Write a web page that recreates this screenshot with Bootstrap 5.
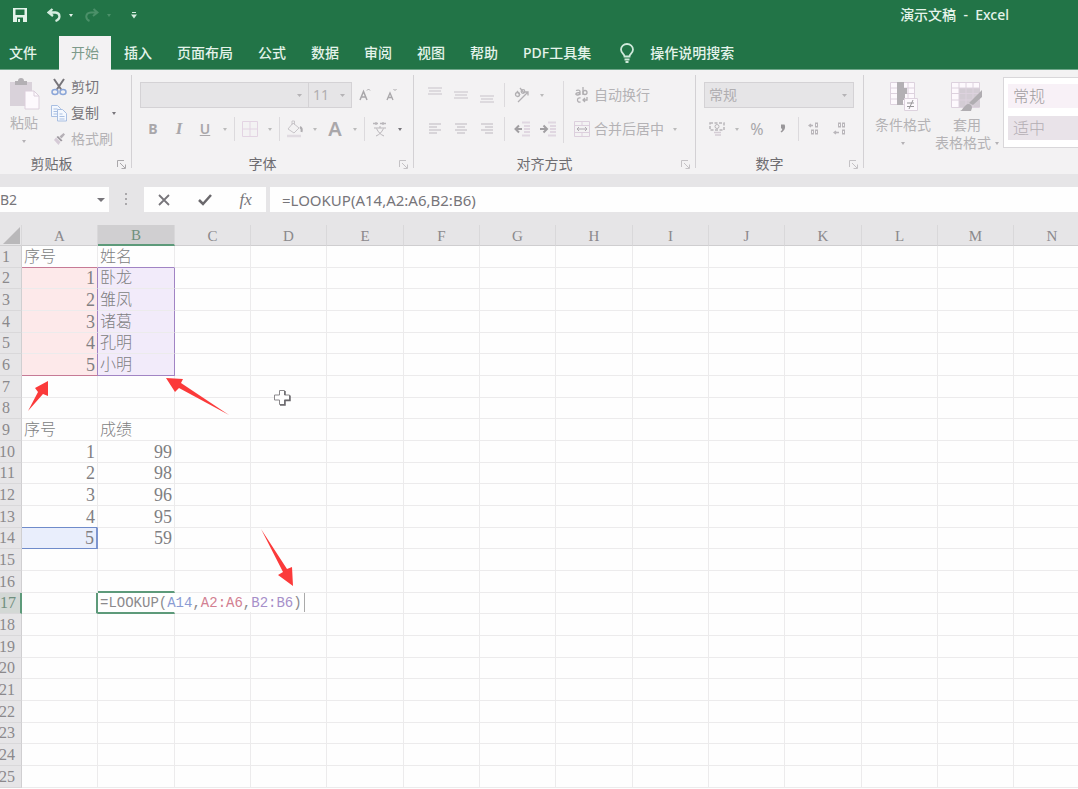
<!DOCTYPE html>
<html lang="zh-CN">
<head>
<meta charset="utf-8">
<meta name="viewport" content="width=device-width, initial-scale=1">
<title>演示文稿 - Excel</title>
<link href="https://cdn.jsdelivr.net/npm/bootstrap@5.3.0/dist/css/bootstrap.min.css" rel="stylesheet">
<style>
:root{--green:#227447;--ribbon:#f3f2f3;--chrome:#e6e5e7;--muted:#b4b2b5;--ink:#77757a}
body{font-family:"Noto Sans","Noto Sans CJK SC",sans-serif;font-size:14px;line-height:18px;color:var(--ink);background:#fefefe}
button{color:inherit;font:inherit;background:none;border:0;padding:0}
svg{display:block;flex:none}
.topbar{background:var(--green);color:#e4f3ea}
.titlebar{height:36px;padding:0 69px 6px 13px}
.doc-title{font-weight:500}
.qat{gap:8px}
.tabs{gap:1px;height:34px;border-bottom:1px solid #6fa78a}
.tab-link{height:34px;padding:0 12px;display:flex;align-items:center;color:#e4f3ea;text-decoration:none;font-weight:500;white-space:nowrap}
.tab-link.file{padding:0 21px 0 9px}
.tab-link.current{background:var(--ribbon);color:#7d9a8a;font-weight:400}
.ribbon{background:var(--ribbon);height:104px;overflow:hidden}
.group{padding-top:8px;flex:none;display:flex;flex-direction:column}
.g-clip{width:131px;padding-top:4px}.g-font,.g-align{width:281px}.g-num{width:167px}
.clip-list{padding-left:11px}
.divide{width:1px;background:#d3d1d4;margin:5px 0 6px;flex:none}
.line{height:34px;display:flex;align-items:center}
.caption-row{height:20px;margin-top:auto;display:flex;align-items:center;color:#6e6c70}
.caption-row span{flex:1;text-align:center}
.caption-row .near{padding-right:8px}
.launch{width:20px;height:20px;display:flex;align-items:center;justify-content:center;color:#aaa8ab}
.tool{width:26px;height:26px;display:inline-flex;align-items:center;justify-content:center;color:#a9a7aa;flex:none}
.drop{width:14px;height:26px;display:inline-flex;align-items:center;justify-content:center;flex:none;color:#bbb}
.drop::before,.tri{content:"";border:2px solid transparent;border-top:3px solid currentColor;border-bottom:0}
.drop.dark{color:#77757a}
.namebox .drop::before{border-width:4px 4px 0}
.bar{width:1px;height:24px;margin:0 2px;background:#dcdadd;flex:none}
.bar.wide{margin:0 4px}
.bar.tall{height:62px;align-self:center}
.pick{border-radius:0;height:26px;padding:0 18px 0 4px;border:1px solid #d4d2d5;background-color:#e6e5e7;color:#b0aeb1;font-size:14px;line-height:18px;background-position:right 6px center;background-size:5px 3px;
--bs-form-select-bg-img:url("data:image/svg+xml,%3csvg xmlns='http://www.w3.org/2000/svg' viewBox='0 0 5 3'%3e%3cpath d='M0 0h5L2.5 3z' fill='%23b5b3b6'/%3e%3c/svg%3e")}
.pick:disabled{background-color:#e6e5e7;color:#b0aeb1;opacity:1}
.p-font{width:169px}.p-size{width:44px;margin-left:-1px}.p-num{width:150px}
.label-btn{display:flex;align-items:center;gap:4px;color:var(--muted);height:26px;white-space:nowrap}
.label-btn.on{color:#77757a}
.big{display:flex;flex-direction:column;align-items:center;color:var(--muted);white-space:nowrap}
.styles{padding-left:3px}
.gallery{background:#fff;border:1px solid #d9d7da;border-right:0;height:71px;margin-top:7px;padding:6px 0 0 4px;flex:1 0 70px;overflow:hidden}
.style-chip{display:block;width:100%;height:24px;padding-left:5px;text-align:left;font-size:16px;line-height:22px;font-weight:300;background:#f8f1f7;color:#a09ca0;margin-bottom:8px}
.style-chip.mid{background:#e9e3e9;color:#b3adb3}
.fbar{background:var(--chrome);padding:13px 0}
.namebox{width:109px;height:25px;background:#fefefe}
.field{border:0;border-radius:0;background:#fefefe;height:25px;padding:0;color:#77757a;font-size:14px;line-height:18px;outline:0}
.namebox .field{width:90px}
.dots{width:35px;color:#aaa8ab}
.fx-tools{width:122px;background:#fefefe;margin-right:4px}
.fx-tools button{width:41px;display:flex;justify-content:center;align-items:center}
.fx-name{font-family:"Liberation Serif",serif;font-size:17px;font-style:italic}
.fx-input{padding-left:12px;flex:1;min-width:0;font-size:15px}
.italic-i{font-family:"Liberation Serif",serif;font-size:17px;font-weight:bold;font-style:italic}
.sheet{flex:1;overflow:hidden;position:relative;min-height:0}
.gridtable{table-layout:fixed;border-collapse:separate;border-spacing:0;width:0;font-size:16px;line-height:20px;font-weight:300;font-family:"Liberation Serif","Noto Sans CJK SC",serif}
.gridtable col{width:76px}
.gridtable col:nth-child(3n){width:77px}
.gridtable col.index{width:22px}
.gridtable th,.gridtable td{padding:0;border:0 solid #ecebec;border-width:0 1px 1px 0;white-space:nowrap;height:22px}
.gridtable tbody tr:nth-child(3n+2)>*{height:21px}
.gridtable th{background:var(--chrome);font-weight:400;color:#8b898c}
.gridtable thead th{height:21px;text-align:center;border-right-color:#d9d8da;border-bottom-color:#cfced0;font-size:15px;line-height:18px;padding-top:2px}
.gridtable thead th:first-child{padding-top:0}
.gridtable tbody th{border-right-color:#d0cfd1;border-bottom-color:#d9d8da;text-align:right;padding-right:7px;direction:rtl}
.gridtable tbody th.short{padding-right:12px}
.gridtable thead th.sel{background:#d0cfd1;border-bottom:2px solid #5d9a7a;color:#6f8f7e;padding-top:1px}
.gridtable tbody th.sel{background:#d3d8d5;border-right:2px solid #5d9a7a;color:#6f8f7e;padding-right:6px}
.gridtable td{padding-left:2px;color:#807e82}
.gridtable td.n{text-align:right;padding-right:2px;font-size:18px}
.gridtable .red{background:#fde9ea}
.gridtable .violet{background:#f2ebfa}
.gridtable .blue{background:#e9eefc;border-right:2px solid #7d95cf}
.gridtable .b-red{border-bottom-color:#c67a96}
.gridtable .b-violet{border-bottom-color:#a184c4}
.gridtable .b-blue{border-bottom-color:#6f8bca}
.gridtable .r-violet{border-right-color:#a184c4}
.gridtable .b-green{border-bottom:2px solid #5d9a7a}
.gridtable .r-green{border-right:2px solid #5d9a7a}
.gridtable .edit{position:relative;border-bottom:2px solid #5d9a7a}
.editor{position:absolute;left:0;top:0;height:19px;padding:0 2px;background:#fefefe;border-right:1px solid #aaa;font:14px/20px "Liberation Mono","Noto Sans CJK SC",monospace;color:#8b898c;z-index:1}
.editor .c1{color:#8a9bd3}.editor .c2{color:#d28091}.editor .c3{color:#a68fc9}
.corner{width:0;height:0;margin-left:3px;border-left:17px solid transparent;border-bottom:17px solid #b9b8ba}
.marks{position:absolute;left:0;top:0;z-index:2;pointer-events:none}
</style>
</head>
<body class="vh-100 overflow-hidden d-flex flex-column">
<header class="topbar flex-shrink-0">
  <div class="titlebar d-flex align-items-center justify-content-between">
    <div class="qat d-flex align-items-center">
      <button aria-label="保存"><svg width="14" height="14" viewBox="0 0 14 14"><path d="M0 0h14v14H0z" fill="#e4f3ea"/><path d="M2.500 1.500h9v5.500h-9zM4 9.500h6V14H4z" fill="#227447"/><path d="M5 11h2v3H5z" fill="#e4f3ea"/></svg></button>
      <button aria-label="撤消" class="ms-2 ps-1"><svg width="14" height="14" viewBox="0 0 14 14" fill="none" stroke="#d5ecdf" stroke-width="2.300"><path d="M5.500 1 1.500 4.500 6 8M2 4.500h6.500c5 .5 5.500 6.500 0 8.500"/></svg></button>
      <span class="tri"></span>
      <button aria-label="恢复" class="ms-1"><svg width="14" height="14" viewBox="0 0 14 14" fill="none" stroke="#4b9069" stroke-width="2"><path d="M8.500 1l4 3.500L8 8M12 4.500H6C0 5 0 11 4.500 13"/></svg></button>
      <span class="tri" style="color:#4b9069"></span>
      <button aria-label="自定义快速访问工具栏" class="ms-2 ps-1"><svg width="6" height="7" viewBox="0 0 6 7" fill="#d5ecdf"><path d="M1 0h4v1H1zM0 2.500h6L3 6.500z"/></svg></button>
    </div>
    <div class="doc-title">演示文稿 &nbsp;-&nbsp; Excel</div>
  </div>
  <nav class="tabs d-flex">
    <a class="tab-link file" href="#">文件</a>
    <a class="tab-link current" href="#" aria-current="page">开始</a>
    <a class="tab-link" href="#">插入</a>
    <a class="tab-link" href="#">页面布局</a>
    <a class="tab-link" href="#">公式</a>
    <a class="tab-link" href="#">数据</a>
    <a class="tab-link" href="#">审阅</a>
    <a class="tab-link" href="#">视图</a>
    <a class="tab-link" href="#">帮助</a>
    <a class="tab-link" href="#">PDF工具集</a>
    <a class="tab-link ps-3" href="#"><svg class="me-3" width="14" height="20" viewBox="0 0 14 20" fill="none" stroke="#cfe9da" stroke-width="1.800"><path d="M4.500 13.500C4.500 11 1 10 1 6.500a6 5.500 0 0 1 12 0c0 3.500-3.500 4.500-3.500 7z"/><path d="M4.500 16.500h5M5.500 19h3"/></svg>操作说明搜索</a>
  </nav>
</header>

<section class="ribbon d-flex flex-shrink-0">
  <div class="group g-clip">
    <div class="d-flex">
      <button class="big ms-2 pt-1 justify-content-start"><svg width="32" height="32" viewBox="0 0 32 32"><path d="M2 4h22v24H2z" fill="#d9d2da"/><path d="M7 3h3a3 3 0 0 1 6 0h3v4H7z" fill="#b3b0b4"/><path d="M17 13h9l5 5v13H17z" fill="#fdf9fd" stroke="#dccfdc"/><path d="M26 13v5h5" fill="none" stroke="#dccfdc"/></svg><span class="mt-1">粘贴</span><span class="tri mt-2"></span></button>
      <div class="clip-list">
        <button class="label-btn on"><svg width="16" height="18" viewBox="0 0 16 18" fill="none"><path d="M3 1l7.500 11M13 1 5.500 12" stroke="#77757a" stroke-width="2"/><ellipse cx="4" cy="14" rx="3" ry="2.500" stroke="#8ba6d8" stroke-width="1.500"/><ellipse cx="12" cy="14" rx="3" ry="2.500" stroke="#8ba6d8" stroke-width="1.500"/></svg>剪切</button>
        <div class="d-flex"><button class="label-btn on"><svg width="16" height="18" viewBox="0 0 16 18" fill="#f4f8fe" stroke="#a9bfe2"><path d="M.5 1.500h6l3 3v8h-9zM2.500 5h4M2.500 7.500h4M2.500 10h4"/><path d="M6.500 5.500h5l4 4v7.500h-9zM8.500 10h3M8.500 12.500h5M8.500 15h5"/></svg>复制</button><button class="drop dark ms-2" aria-label="复制选项"></button></div>
        <button class="label-btn"><svg width="16" height="16" viewBox="0 0 16 16"><path d="M12.500 2l1.500 1.500-3.500 4-2-2z" fill="#b5b0b6"/><path d="M7 5l4.500 4.500-1.500 1-4.500-4.500z" fill="#9d989f"/><path d="M5 6.500l4.500 4.500-2 3L3 9z" fill="#d6cbd7"/></svg>格式刷</button>
      </div>
    </div>
    <div class="caption-row"><span class="near">剪贴板</span><button class="launch" aria-label="剪贴板设置"><svg width="9" height="9" viewBox="0 0 9 9" fill="none" stroke="currentColor"><path d="M.5 7V.5H7M3 3l5 5M8.500 4.500v4h-4"/></svg></button></div>
  </div>
  <div class="divide"></div>

  <div class="group g-font">
    <div class="line ps-2">
      <select class="form-select pick p-font" aria-label="字体" disabled><option></option></select>
      <select class="form-select pick p-size" aria-label="字号" disabled><option>11</option></select>
      <button class="tool" aria-label="增大字号"><svg width="16" height="16" viewBox="0 0 16 16" fill="none" stroke="currentColor"><path d="M3 13 6.500 4.500 10 13M4.500 10h4" stroke-width="1.500"/><path d="M10 3.500 11.500 2 13 3.500"/></svg></button>
      <button class="tool" aria-label="减小字号"><svg width="16" height="16" viewBox="0 0 16 16" fill="none" stroke="currentColor"><path d="M4 13 7 6l3 7M5 10.500h4" stroke-width="1.300"/><path d="M10.500 2 12 3.500 13.500 2"/></svg></button>
    </div>
    <div class="line ps-2">
      <button class="tool fw-bold">B</button>
      <button class="tool italic-i">I</button>
      <button class="tool text-decoration-underline fw-semibold">U</button>
      <button class="drop" aria-label="下划线选项"></button>
      <span class="bar"></span>
      <button class="tool" aria-label="边框"><svg width="16" height="16" viewBox="0 0 16 16" fill="none" stroke="#e3d4e3"><path d="M.5.5h15v15H.5zM8 .5v15M.5 8h15"/></svg></button>
      <button class="drop" aria-label="边框选项"></button>
      <span class="bar"></span>
      <button class="tool" aria-label="填充颜色"><svg width="18" height="18" viewBox="0 0 18 18" fill="none" stroke="#c8c5c9"><path d="M7 3l6 5-5 5-6-4zM6 5V1h2.500v4"/><path d="M14 7c2 1 2 3 1.500 5" stroke-width="2" stroke="#b0aeb1"/><path d="M1 16h14" stroke-width="2.500" stroke="#e0dbe1"/></svg></button>
      <button class="drop" aria-label="填充选项"></button>
      <button class="tool fw-semibold fs-5" aria-label="字体颜色">A</button>
      <button class="drop" aria-label="颜色选项"></button>
      <span class="bar"></span>
      <button class="tool" aria-label="拼音指南"><svg width="16" height="16" viewBox="0 0 16 16" fill="none" stroke="#b9b6ba"><path d="M1 2.500h5M8 2.500h6M4 1v3M11 1v3" stroke-width="1.300"/><path d="M2 7h12M8 5v2M4.500 7.500c2 4 4 6 7.500 7.500M11.500 7.500c-2 4-4 6-7.500 7.500"/></svg></button>
      <button class="drop dark" aria-label="拼音选项"></button>
    </div>
    <div class="caption-row"><span>字体</span><button class="launch" aria-label="字体设置"><svg width="9" height="9" viewBox="0 0 9 9" fill="none" stroke="#c4c2c5"><path d="M.5 7V.5H7M3 3l5 5M8.500 4.500v4h-4"/></svg></button></div>
  </div>
  <div class="divide"></div>

  <div class="group g-align">
    <div class="d-flex ps-2">
      <div>
        <div class="line">
          <button class="tool" aria-label="顶端对齐"><svg width="14" height="16" stroke="#dddade" stroke-width="2"><path d="M0 1h14M1 4h12M0 7h14"/></svg></button>
          <button class="tool" aria-label="垂直居中"><svg width="14" height="16" stroke="#dddade" stroke-width="2"><path d="M0 5h14M1 8h12M0 11h14"/></svg></button>
          <button class="tool" aria-label="底端对齐"><svg width="14" height="16" stroke="#dddade" stroke-width="2"><path d="M0 9h14M1 12h12M0 15h14"/></svg></button>
          <span class="bar wide"></span>
          <button class="tool" aria-label="方向"><svg width="16" height="16" viewBox="0 0 16 16" fill="none" stroke="#b2b0b3" stroke-width="1.300"><path d="M4 15 14 5M10.500 5H14v3.500"/><circle cx="3.500" cy="7.500" r="2"/><path d="M3 4l3 4M6 1l4 5"/><circle cx="9" cy="4.500" r="1.800"/></svg></button>
          <button class="drop" aria-label="方向选项"></button>
        </div>
        <div class="line">
          <button class="tool" aria-label="左对齐"><svg width="14" height="14" stroke="#d8d5d9" stroke-width="2"><path d="M1 2h12M1 5h8M1 8h12M1 11h8"/></svg></button>
          <button class="tool" aria-label="居中"><svg width="14" height="14" stroke="#d8d5d9" stroke-width="2"><path d="M1 2h12M3 5h8M1 8h12M3 11h8"/></svg></button>
          <button class="tool" aria-label="右对齐"><svg width="14" height="14" stroke="#d8d5d9" stroke-width="2"><path d="M1 2h12M5 5h8M1 8h12M5 11h8"/></svg></button>
          <span class="bar wide"></span>
          <button class="tool" aria-label="减少缩进量"><svg width="18" height="16" viewBox="0 0 18 16" fill="none"><path d="M9 1.500h8M11 5h6M11 8h6M11 11h6M9 14.500h8" stroke="#e0d7e1" stroke-width="2"/><path d="M9 8H3M6 4.500 2.500 8 6 11.500" stroke="#a19fa2" stroke-width="2"/></svg></button>
          <button class="tool" aria-label="增加缩进量"><svg width="18" height="16" viewBox="0 0 18 16" fill="none"><path d="M9 1.500h8M11 5h6M11 8h6M11 11h6M9 14.500h8" stroke="#e0d7e1" stroke-width="2"/><path d="M1 8h6M4.500 4.500 8 8l-3.500 3.500" stroke="#a19fa2" stroke-width="2"/></svg></button>
        </div>
      </div>
      <span class="bar tall"></span>
      <div class="ps-2">
        <div class="line"><button class="label-btn"><svg width="16" height="18" viewBox="0 0 16 18" fill="none" stroke="#b0aeb1" stroke-width="1.300"><path d="M2 4.500c3-1 4 0 4 1V9M6 6.500c-5 0-5 2.500-2.500 2.500C5 9 6 8 6 7M9 1v8"/><circle cx="11" cy="6.500" r="2"/><path d="M6.500 12c-4-1-4 5 0 4M13 11v3H9M11 12l-2 2 2 2"/></svg>自动换行</button></div>
        <div class="line"><button class="label-btn"><svg width="16" height="16" viewBox="0 0 16 16" fill="none"><path d="M.5.500h15v15H.5zM.5 4.500h15M.5 11.500h15M8 .5v4M8 11.500v4" stroke="#dccfdd"/><path d="M3 8h10M5 6 3 8l2 2M11 6l2 2-2 2" stroke="#b0aab2"/></svg>合并后居中</button><button class="drop ms-1" aria-label="合并选项"></button></div>
      </div>
    </div>
    <div class="caption-row"><span>对齐方式</span><button class="launch" aria-label="对齐设置"><svg width="9" height="9" viewBox="0 0 9 9" fill="none" stroke="#c4c2c5"><path d="M.5 7V.5H7M3 3l5 5M8.500 4.500v4h-4"/></svg></button></div>
  </div>
  <div class="divide"></div>

  <div class="group g-num">
    <div class="line ps-2"><select class="form-select pick p-num" aria-label="数字格式" disabled><option>常规</option></select></div>
    <div class="line ps-2">
      <button class="tool" aria-label="会计数字格式"><svg width="16" height="16" viewBox="0 0 16 16" fill="none" stroke="#b9b6ba"><path d="M1 2h14v7H1z" stroke-dasharray="3 1.500" stroke-width="1.500"/><circle cx="8" cy="5.500" r="2"/><path d="M5 11.500h7M6 14h6" stroke="#d5cdd5" stroke-width="1.500"/></svg></button>
      <button class="drop" aria-label="货币选项"></button>
      <button class="tool fs-6" aria-label="百分比">%</button>
      <button class="tool" aria-label="千位分隔"><svg width="8" height="12" viewBox="0 0 8 12"><path d="M2 1.500h3.500c1.500 3 0 6-3 8l-1-1c1.500-1 2-2 1.500-3H2z" fill="#99979a"/></svg></button>
      <span class="bar"></span>
      <button class="tool" aria-label="增加小数位数"><svg width="12" height="14" viewBox="0 0 12 14" fill="none" stroke="#b9b6ba"><path d="M1 3.500h4M3 2 1 3.500 3 5" stroke-width="1.300"/><rect x="7.500" y="1" width="2" height="4"/><rect x="3.500" y="8" width="2" height="4"/><rect x="7.500" y="8" width="2" height="4"/></svg></button>
      <button class="tool" aria-label="减少小数位数"><svg width="14" height="14" viewBox="0 0 14 14" fill="none" stroke="#b9b6ba"><path d="M1 10.500h5M3 9l-2 1.500L3 12" stroke-width="1.300"/><rect x="5.500" y="1" width="2" height="4"/><rect x="9.500" y="1" width="2" height="4"/><rect x="9.500" y="8" width="2" height="4"/></svg></button>
    </div>
    <div class="caption-row"><span>数字</span><button class="launch" aria-label="数字设置"><svg width="9" height="9" viewBox="0 0 9 9" fill="none" stroke="#c4c2c5"><path d="M.5 7V.5H7M3 3l5 5M8.500 4.500v4h-4"/></svg></button></div>
  </div>
  <div class="divide"></div>

  <div class="styles d-flex flex-fill overflow-hidden">
    <button class="big ps-2 pt-1 justify-content-start flex-shrink-0 mt-2"><svg width="30" height="30" viewBox="0 0 30 30"><path d="M2.500.5h24v22h-24z" fill="#fdf9fd" stroke="#ddd2de"/><path d="M2 6h25M2 11.500h25M2 17h25M20 0v23" stroke="#ddd2de" fill="none"/><path d="M9 0h7v6h3v6h-2v6h-2v5H9z" fill="#b3b0b4"/><path d="M16.500 16.500h13v12h-13z" fill="#fdf9fd" stroke="#ddd2de"/><path d="M19 21h7M19 24.500h7M25 18l-4 9" stroke="#99979a"/></svg><span class="mt-1">条件格式</span><span class="tri mt-2"></span></button>
    <button class="big ps-1 pe-1 pt-1 justify-content-start flex-shrink-0 mt-2"><svg width="32" height="30" viewBox="0 0 32 30"><path d="M.5.5h28v25H.5z" fill="#fdf9fd" stroke="#ddd2de"/><path d="M8 6h21v19H8z" fill="#d3ccd4"/><path d="M0 6h29M0 11.500h29M0 18h29M8 0v26M15 0v26M22 0v26" stroke="#ddd2de" fill="none"/><path d="M31 8v7l-9 8-4-2zM17 22c3 0 4 2 4 4l-1 3H9c3-1 4-6 8-7z" fill="#b0adb1"/></svg><span class="mt-1">套用</span><span class="d-flex align-items-center">表格格式<span class="tri ms-1"></span></span></button>
    <div class="gallery"><button class="style-chip">常规</button><button class="style-chip mid">适中</button></div>
  </div>
</section>

<section class="fbar d-flex flex-shrink-0">
  <div class="namebox d-flex align-items-center"><input class="field" aria-label="名称框" value="B2"><button class="drop dark ms-1" aria-label="名称列表"></button></div>
  <div class="dots d-flex align-items-center justify-content-center"><svg width="3" height="13" fill="currentColor"><path d="M0 0h2v2H0zM0 5h2v2H0zM0 10h2v2H0z"/></svg></div>
  <div class="fx-tools d-flex">
    <button aria-label="取消"><svg width="12" height="12" viewBox="0 0 12 12" fill="none" stroke="#77757a" stroke-width="1.800"><path d="M1 1l10 10M11 1 1 11"/></svg></button>
    <button aria-label="输入"><svg width="14" height="12" viewBox="0 0 14 12" fill="none" stroke="#6a686c" stroke-width="2.500"><path d="M1 6l4 4 8-9"/></svg></button>
    <button class="fx-name" aria-label="插入函数">fx</button>
  </div>
  <input class="field fx-input" aria-label="编辑栏" value="=LOOKUP(A14,A2:A6,B2:B6)">
</section>

<main class="sheet">
  <table class="gridtable" id="grid"></table>
  <svg class="marks" width="340" height="380" viewBox="0 225 340 380">
    <g fill="#fb3a3a">
      <path d="M28 411 38 392l-3-4 13-7v15l-5-2z"/>
      <path d="M166 378l17 1-2 4 48 32-50-27-4 4z"/>
      <path d="M261 529l26 40 5-2 1 19-15-11 5-3z"/>
    </g>
    <path d="M279.500 390.500h5v4.500h5v5h-5v4.500h-5V400h-5v-5h5z" fill="#fff" stroke="#8b898c"/>
    <path d="M285 391v4M290 395.500v5h-5v4.500h-5" fill="none" stroke="#6a686c" stroke-width="1.500"/>
  </svg>
</main>

<script>
const letters = 'ABCDEFGHIJKLMN'.split('');
const values = {
  A1:'序号', B1:'姓名', A2:1, B2:'卧龙', A3:2, B3:'雏凤', A4:3, B4:'诸葛', A5:4, B5:'孔明', A6:5, B6:'小明',
  A9:'序号', B9:'成绩', A10:1, B10:99, A11:2, B11:98, A12:3, B12:96, A13:4, B13:95, A14:5, B14:59
};
const marks = {
  A1:'b-red', B1:'b-violet', A2:'red r-violet', A3:'red r-violet', A4:'red r-violet', A5:'red r-violet', A6:'red r-violet b-red',
  B2:'violet r-violet', B3:'violet r-violet', B4:'violet r-violet', B5:'violet r-violet', B6:'violet r-violet b-violet',
  A13:'b-blue', A14:'blue b-blue', B16:'b-green', A17:'r-green', B17:'edit'
};
const formula = '<span class="editor">=LOOKUP(<span class="c1">A14</span>,<span class="c2">A2:A6</span>,<span class="c3">B2:B6</span>)</span>';
let html = '<colgroup><col class="index">' + letters.map(() => '<col>').join('') + '</colgroup><thead><tr><th><div class="corner"></div></th>';
html += letters.map(l => `<th scope="col"${l === 'B' ? ' class="sel"' : ''}>${l}</th>`).join('') + '</tr></thead><tbody>';
for (let r = 1; r <= 25; r++) {
  html += `<tr><th scope="row" class="${r < 10 ? 'short' : ''}${r === 17 ? ' sel' : ''}">${r}</th>`;
  for (const l of letters) {
    const v = values[l + r];
    html += `<td class="${marks[l + r] || ''}${typeof v === 'number' ? ' n' : ''}">${l + r === 'B17' ? formula : v ?? ''}</td>`;
  }
  html += '</tr>';
}
document.getElementById('grid').innerHTML = html + '</tbody>';
</script>
<script src="https://cdn.jsdelivr.net/npm/bootstrap@5.3.0/dist/js/bootstrap.bundle.min.js"></script>
</body>
</html>
